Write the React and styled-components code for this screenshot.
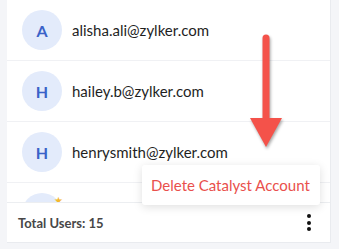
import React from 'react';
import styled, { createGlobalStyle } from 'styled-components';

const GlobalStyle = createGlobalStyle`
  html, body {
    margin: 0;
    padding: 0;
    background: #f4f5f8;
    font-family: Lato, "Open Sans", sans-serif;
    overflow: hidden;
  }
`;

const Page = styled.div`
  width: 339px;
  height: 249px;
  padding-left: 7px;
  box-sizing: border-box;
`;

const Card = styled.div`
  position: relative;
  width: 324px;
  height: 243px;
  background: #ffffff;
  border-right: 1px solid #e9ebef;
  border-bottom: 1px solid #e9ebef;
  box-sizing: border-box;
  display: flex;
  flex-direction: column;
`;

const List = styled.div`
  flex: 1;
  overflow: hidden;
`;

const Row = styled.div`
  height: 60px;
  display: flex;
  align-items: center;
  gap: 10px;
  padding-left: 15px;
  border-bottom: 1px solid #f0f1f4;
`;

const AvatarWrap = styled.div`
  position: relative;
  flex: none;
`;

const Avatar = styled.div`
  width: 40px;
  height: 40px;
  border-radius: 50%;
  background: #e3ebfb;
  color: #3a62c8;
  font-weight: 700;
  font-size: 16px;
  display: flex;
  align-items: center;
  justify-content: center;
`;

const Star = styled.span`
  position: absolute;
  top: 2px;
  right: -1px;
  color: #f5b82e;
  font-size: 10px;
  line-height: 1;
`;

const Email = styled.div`
  font-size: 15px;
  color: #1f1f1f;
`;

const Footer = styled.div`
  height: 40px;
  flex: none;
  border-top: 1px solid #eceef1;
  display: flex;
  align-items: center;
  justify-content: space-between;
  padding: 0 16px 0 11px;
  box-sizing: border-box;
`;

const Total = styled.div`
  font-size: 13px;
  font-weight: 700;
  color: #474747;
`;

const Kebab = styled.div`
  display: flex;
  flex-direction: column;
  gap: 2.5px;
  margin-right: 3px;
`;

const Dot = styled.span`
  width: 4px;
  height: 4px;
  border-radius: 50%;
  background: #111;
`;

const Menu = styled.div`
  position: absolute;
  left: 135px;
  top: 165px;
  width: 178px;
  height: 40px;
  background: #ffffff;
  border-radius: 3px;
  box-shadow: 0 2px 10px rgba(0, 0, 0, 0.13);
  display: flex;
  align-items: center;
  padding-left: 9px;
  box-sizing: border-box;
`;

const MenuItem = styled.div`
  color: #e9504c;
  font-size: 15px;
`;

const Arrow = styled.svg`
  position: absolute;
  left: 241px;
  top: 34px;
  filter: drop-shadow(1px 2px 1.5px rgba(0, 0, 0, 0.35));
`;

const users = [
  { letter: 'A', email: 'alisha.ali@zylker.com' },
  { letter: 'H', email: 'hailey.b@zylker.com' },
  { letter: 'H', email: 'henrysmith@zylker.com' },
  { letter: 'M', email: 'Mamie Crane', star: true },
];

const App = () => (
  <Page>
    <GlobalStyle />
    <Card>
      <List>
        {users.map((u, i) => (
          <Row key={i}>
            <AvatarWrap>
              <Avatar>{u.letter}</Avatar>
              {u.star && <Star>★</Star>}
            </AvatarWrap>
            <Email>{u.email}</Email>
          </Row>
        ))}
      </List>
      <Footer>
        <Total>Total Users: 15</Total>
        <Kebab>
          <Dot />
          <Dot />
          <Dot />
        </Kebab>
      </Footer>
      <Menu>
        <MenuItem>Delete Catalyst Account</MenuItem>
      </Menu>
      <Arrow width="40" height="120" viewBox="0 0 40 120">
        <line x1="18" y1="4" x2="18" y2="88" stroke="#f4524a" strokeWidth="7" strokeLinecap="round" />
        <polygon points="2,84 34,84 18,113" fill="#f4524a" />
      </Arrow>
    </Card>
  </Page>
);

export default App;
